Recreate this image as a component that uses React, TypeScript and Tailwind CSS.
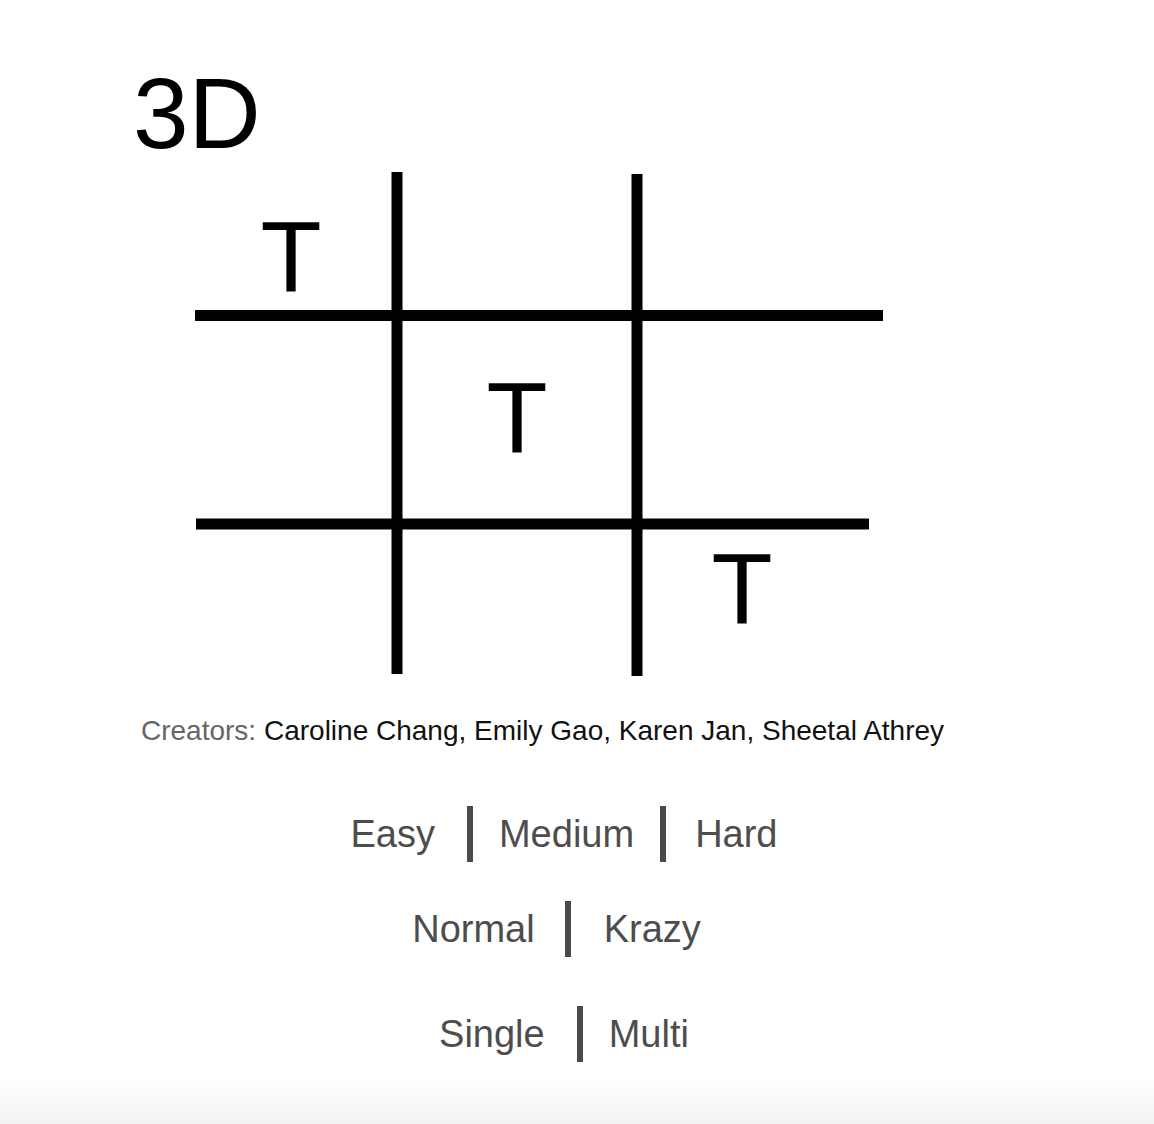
const font = { fontFamily: '"Liberation Sans", Arial, Helvetica, sans-serif' }

function Board() {
    // hand-drawn looking tic-tac-toe board, origin at (190, 170) on the page
    return (
        <svg width="700" height="510" viewBox="0 0 700 510" className="block ml-[190px] mt-[6px]">
            <g stroke="#000" strokeWidth="11" strokeLinecap="butt">
                <line x1="207" y1="3" x2="207" y2="505" />
                <line x1="447" y1="5" x2="447" y2="507" />
                <line x1="5" y1="146.5" x2="693" y2="146.5" />
                <line x1="6" y1="355" x2="679" y2="355" />
            </g>
            <g fill="#000" fontSize="100" textAnchor="middle" style={font}>
                <text x="101" y="122">T</text>
                <text x="327" y="283">T</text>
                <text x="552" y="454">T</text>
            </g>
        </svg>
    )
}

const barGaps = [
    ['ml-[32px]', 'mr-[26px]'],
    ['ml-[26px]', 'mr-[29px]'],
]

function Choice({ items, gaps, className }: { items: string[]; gaps: string[][]; className?: string }) {
    return (
        <div className={`flex items-center justify-center ${className ?? ''}`}>
            {items.map((item, i) => (
                <div key={item} className="flex items-center">
                    {i > 0 && <span className={`block w-[6px] h-[56px] bg-[#4a4a4a] ${gaps[i - 1][0]} ${gaps[i - 1][1]}`} />}
                    <span className="text-[38px] leading-none text-[#4d4d4d]">{item}</span>
                </div>
            ))}
        </div>
    )
}

export default function App() {
    return (
        <div className="min-h-[1124px] h-[1124px] bg-white flex flex-col overflow-hidden" style={font}>
            <h1 className="ml-[133px] pt-[63px] text-[100px] leading-none font-normal text-black">3D</h1>
            <Board />
            <p className="ml-[141px] mt-[38px] text-[28px] leading-none text-[#111]">
                <span className="text-[#666]">Creators:</span> Caroline Chang, Emily Gao, Karen Jan, Sheetal Athrey
            </p>
            <div className="w-[1128px] flex flex-col">
                <Choice items={['Easy', 'Medium', 'Hard']} gaps={barGaps} className="mt-[61px]" />
                <Choice items={['Normal', 'Krazy']} gaps={[['ml-[30px]', 'mr-[33px]']]} className="mt-[39px] pr-[15px]" />
                <Choice items={['Single', 'Multi']} gaps={[['ml-[32px]', 'mr-[26px]']]} className="mt-[49px]" />
            </div>
            <div className="mt-auto h-[44px] bg-gradient-to-b from-white to-[#f3f3f3]" />
        </div>
    )
}
